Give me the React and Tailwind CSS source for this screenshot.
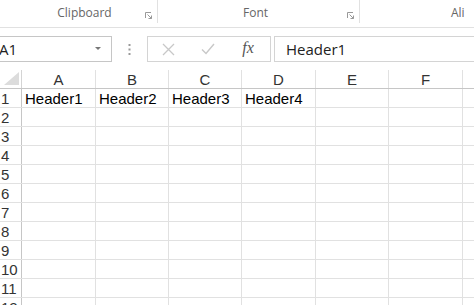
import React from "react";

const cols = [
  { l: "A", w: 74 },
  { l: "B", w: 73 },
  { l: "C", w: 73 },
  { l: "D", w: 74 },
  { l: "E", w: 73 },
  { l: "F", w: 74 },
  { l: "G", w: 74 },
];
const data = { 1: ["Header1", "Header2", "Header3", "Header4"] };

export default function App() {
  const rows = Array.from({ length: 12 }, (_, i) => i + 1);
  return (
    <div className="w-[474px] h-[305px] overflow-hidden bg-white relative" style={{ fontFamily: "'Open Sans', 'Noto Sans', sans-serif" }}>
      {/* Ribbon group labels */}
      <div className="h-[28px] border-b border-[#e1e1e1] flex text-[12px] text-[#666]">
        <div className="w-[158px] shrink-0 border-r border-[#e1e1e1] relative flex items-end justify-center pb-[1px] mb-[4px]">
          <span className="pl-[12px]">Clipboard</span>
          <DialogIcon className="absolute right-[5px] bottom-[4px]" />
        </div>
        <div className="w-[202px] shrink-0 border-r border-[#e1e1e1] relative flex items-end justify-center pb-[1px] mb-[4px]">
          <span className="pr-[6px]">Font</span>
          <DialogIcon className="absolute right-[5px] bottom-[4px]" />
        </div>
        <div className="flex-1 flex items-end pb-[1px] mb-[4px] pl-[91px]">
          <span>Ali</span>
        </div>
      </div>
      {/* Formula row */}
      <div className="mt-[8px] h-[26px] flex items-stretch">
        <div className="w-[112px] shrink-0 border border-l-0 border-[#c6c6c6] flex items-center justify-between pr-[10px]">
          <span className="text-[15px] text-[#222] -ml-[1px]">A1</span>
          <svg width="6" height="4" viewBox="0 0 6 4"><path d="M0 0 L6 0 L3 3 Z" fill="#777" /></svg>
        </div>
        <div className="w-[35px] shrink-0 flex items-center justify-center">
          <svg width="3" height="11" viewBox="0 0 3 11">
            <rect x="0.5" y="0" width="2" height="2" fill="#999" />
            <rect x="0.5" y="4.5" width="2" height="2" fill="#999" />
            <rect x="0.5" y="9" width="2" height="2" fill="#999" />
          </svg>
        </div>
        <div className="w-[124px] shrink-0 border border-[#d4d4d4] flex items-center">
          <div className="w-[40px] flex justify-center">
            <svg width="13" height="13" viewBox="0 0 13 13"><path d="M1 1 L12 12 M12 1 L1 12" stroke="#c8c8c8" strokeWidth="1.3" /></svg>
          </div>
          <div className="w-[40px] flex justify-center">
            <svg width="14" height="12" viewBox="0 0 14 12"><path d="M1 6.5 L5 10.5 L13 1" stroke="#c8c8c8" strokeWidth="1.4" fill="none" /></svg>
          </div>
          <div className="w-[40px] flex justify-center">
            <span className="italic text-[16px] text-[#555] -mt-[2px]" style={{ fontFamily: "'Liberation Serif', serif" }}>fx</span>
          </div>
        </div>
        <div className="ml-[3px] flex-1 border border-r-0 border-[#d4d4d4] flex items-center pl-[11px]">
          <span className="text-[15px] text-[#222]">Header1</span>
        </div>
      </div>
      {/* Grid */}
      <div className="mt-[8px]" style={{ fontFamily: "'Liberation Sans', Arial, sans-serif" }}>
        <div className="flex h-[19px] border-b border-[#c6c6c6]">
          <div className="w-[22px] shrink-0 border-r border-[#d4d4d4] relative">
            <svg className="absolute right-[2px] bottom-[3px]" width="15" height="13" viewBox="0 0 15 13"><path d="M15 0 L15 13 L0 13 Z" fill="#dcdcdc" /></svg>
          </div>
          {cols.map((c) => (
            <div key={c.l} style={{ width: c.w }} className="shrink-0 border-r border-[#e1e1e1] flex items-center justify-center text-[15px] text-[#333] leading-none pt-[1px]">
              {c.l}
            </div>
          ))}
        </div>
        {rows.map((r) => (
          <div key={r} className="flex h-[19px] border-b border-[#e1e1e1]">
            <div className="w-[22px] shrink-0 border-r border-[#c6c6c6] flex items-center text-[15px] text-[#333] leading-none pl-[1px]">
              {r}
            </div>
            {cols.map((c, i) => (
              <div key={c.l} style={{ width: c.w }} className="shrink-0 border-r border-[#e1e1e1] flex items-center text-[15px] text-black leading-none pl-[3px] pt-[1px]">
                {(data[r] || [])[i] || ""}
              </div>
            ))}
          </div>
        ))}
      </div>
    </div>
  );
}

function DialogIcon({ className }) {
  return (
    <svg className={className} width="7" height="7" viewBox="0 0 7 7">
      <path d="M0.5 6 L0.5 0.5 L6 0.5" stroke="#999" fill="none" />
      <path d="M2.5 2.5 L6.5 6.5 M6.5 3.5 L6.5 6.5 L3.5 6.5" stroke="#999" fill="none" />
    </svg>
  );
}
